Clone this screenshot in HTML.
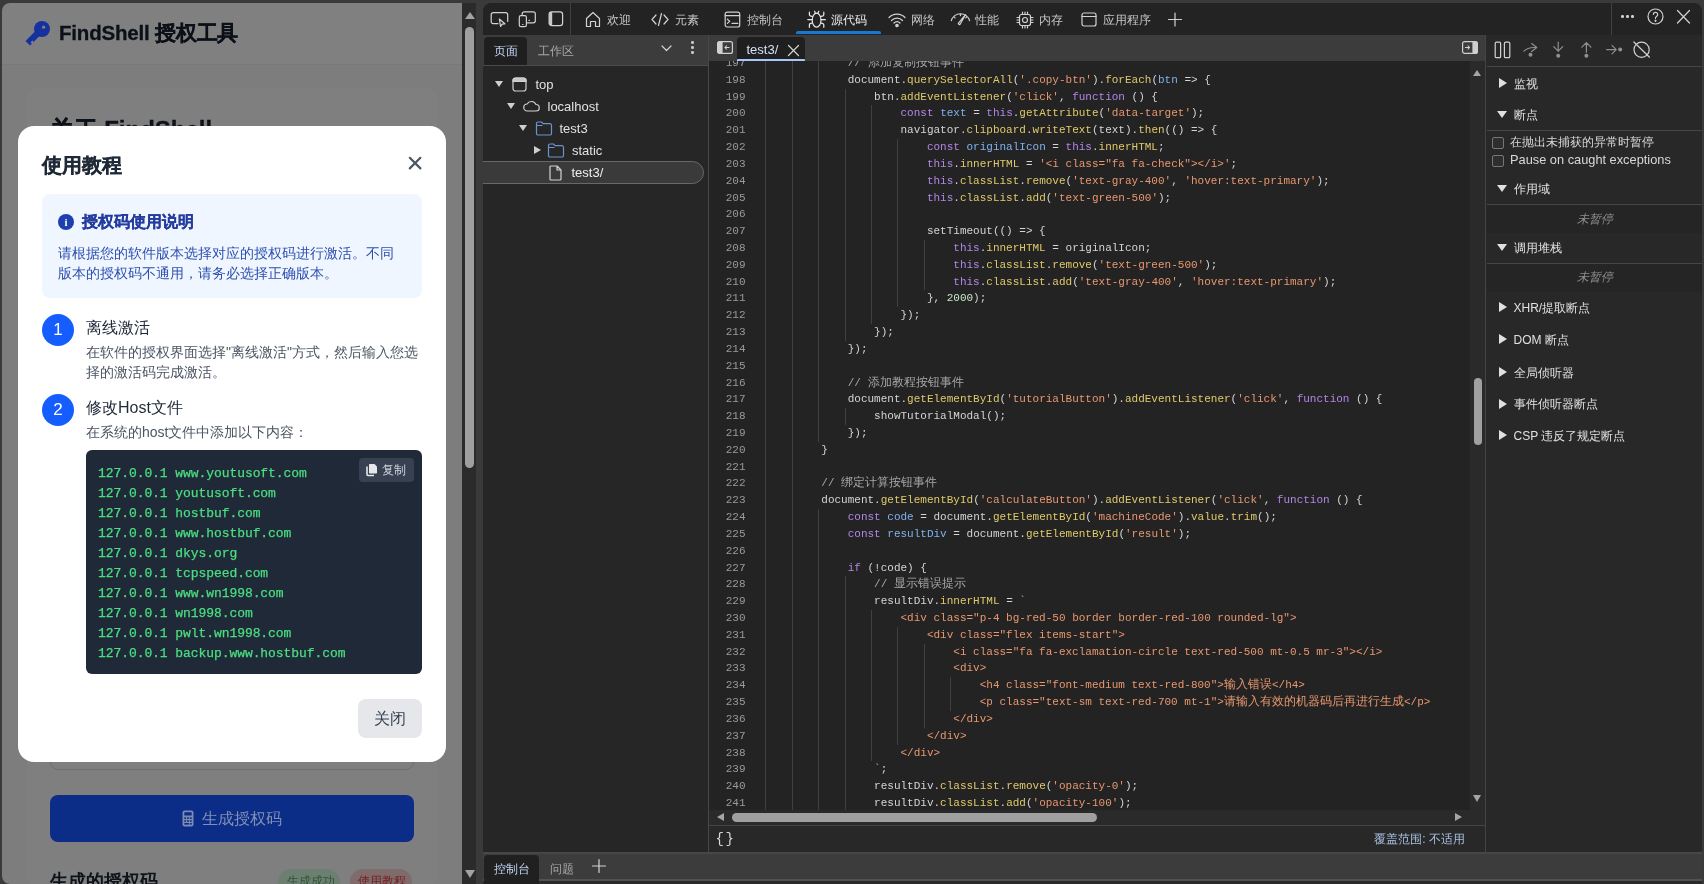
<!DOCTYPE html><html><head><meta charset="utf-8"><style>
*{box-sizing:border-box;margin:0;padding:0}
html,body{width:1704px;height:884px;overflow:hidden;background:#3a3a3a}
body{position:relative;font-family:"Liberation Sans",sans-serif}
.a{position:absolute}
.ic{position:absolute;overflow:visible}
#page{position:absolute;left:0;top:0;width:1704px;height:884px;clip-path:inset(3px 1242px 0 2px round 8px 0 0 8px);background:#7d7d7d}
#dt{position:absolute;left:0;top:0;width:1704px;height:884px;clip-path:inset(3px 2px 0 483px round 8px 8px 0 0);background:#282828}
.tb{position:absolute;font-size:12px;color:#c6c6c6;line-height:14px;white-space:nowrap}
.lno{position:absolute;left:709px;width:36.5px;text-align:right;height:16.82px;line-height:16.82px;font-family:"Liberation Mono",monospace;font-size:11px;color:#9a9a9a}
.ln{position:absolute;height:16.82px;line-height:16.82px;font-family:"Liberation Mono",monospace;font-size:11px;color:#d4d4d4;white-space:pre}
.ln .cj{font-size:12px}
.gd{position:absolute;width:1px;background:#404040}
.k{color:#b186e6}.s{color:#e8976f}.f{color:#e0c96a}.v{color:#80b2ec}.d{color:#d4d4d4}.c{color:#a6a6a6}.n{color:#c9e8c9}
.sbt{position:absolute;left:1513px;font-size:12px;color:#d8d8d8;line-height:14px;white-space:nowrap}
.tri{position:absolute;width:0;height:0}
.mono{font-family:"Liberation Mono",monospace}
#page,#dt,#code{will-change:transform}
</style></head><body>
<div id="page">
<div class="a" style="left:2px;top:3px;width:460px;height:62px;background:#808080;border-bottom:1.5px solid #787878"></div>
<svg class="ic" style="left:20px;top:14px" width="36" height="36" viewBox="0 0 36 36" ><circle cx="22" cy="15" r="8" fill="#14319f"/><path d="M18.5 18.5L7.8 29.2" stroke="#14319f" stroke-width="6.4" stroke-linecap="butt"/><path d="M10.5 28.4L12.4 26.5 14.3 28.4 12.4 30.3z" fill="#7f7f7f"/><circle cx="23.6" cy="13.2" r="1.6" fill="#808080"/></svg>
<div class="a" style="left:59px;top:20.8px;font-size:20.5px;line-height:24.5px;color:#0c1018;white-space:nowrap;font-weight:bold;letter-spacing:-0.2px;-webkit-text-stroke:0.3px #0c1018">FindShell 授权工具</div>
<div class="a" style="left:26px;top:87px;width:412px;height:800px;background:#7f7f7f;border-radius:12px;box-shadow:0 0 1px rgba(0,0,0,0.08)"></div>
<div class="a" style="left:49.5px;top:115.5px;font-size:24px;line-height:28px;color:#0e121a;white-space:nowrap;font-weight:bold;-webkit-text-stroke:0.3px #0e121a">关于 FindShell</div>
<div class="a" style="left:50px;top:720px;width:364px;height:50px;border:1px solid #6e6e6e;border-radius:8px"></div>
<div class="a" style="left:50px;top:795px;width:364px;height:47px;background:#0b2d88;border-radius:8px"></div>
<svg class="ic" style="left:182px;top:810px" width="12" height="17" viewBox="0 0 12 17" ><rect x="0.5" y="0.5" width="11" height="16" rx="2" fill="#7d8bb2"/><rect x="2.3" y="2.3" width="7.4" height="3.2" rx=".5" fill="#0b2d88"/><g fill="#0b2d88"><rect x="2.3" y="7.3" width="1.8" height="1.6"/><rect x="5.1" y="7.3" width="1.8" height="1.6"/><rect x="7.9" y="7.3" width="1.8" height="1.6"/><rect x="2.3" y="10.2" width="1.8" height="1.6"/><rect x="5.1" y="10.2" width="1.8" height="1.6"/><rect x="7.9" y="10.2" width="1.8" height="1.6"/><rect x="2.3" y="13" width="4.6" height="1.6"/><rect x="7.9" y="13" width="1.8" height="1.6"/></g></svg>
<div class="a" style="left:202px;top:809.0px;font-size:16px;line-height:20px;color:#8290b5;white-space:nowrap;">生成授权码</div>
<div class="a" style="left:50px;top:870.0px;font-size:18px;line-height:22px;color:#0e121a;white-space:nowrap;font-weight:bold">生成的授权码</div>
<div class="a" style="left:278px;top:869px;width:62px;height:26px;background:#6d7f70;border-radius:13px"></div>
<div class="a" style="left:287px;top:873.0px;font-size:12px;line-height:16px;color:#2d5638;white-space:nowrap;">生成成功</div>
<div class="a" style="left:350px;top:869px;width:62px;height:26px;background:#7f6b6b;border-radius:13px"></div>
<div class="a" style="left:358px;top:873.0px;font-size:12px;line-height:16px;color:#742020;white-space:nowrap;">使用教程</div>
<div class="a" style="left:18px;top:126px;width:428px;height:636px;background:#fff;border-radius:16px"></div>
<div class="a" style="left:42px;top:153.0px;font-size:20px;line-height:24px;color:#1f2937;white-space:nowrap;font-weight:bold;-webkit-text-stroke:0.3px #1f2937">使用教程</div>
<svg class="ic" style="left:407.5px;top:155.5px" width="14" height="14" viewBox="0 0 14 14" ><path d="M1.8 1.8l10.6 10.6M12.4 1.8L1.8 12.4" stroke="#4b5563" stroke-width="2.2" stroke-linecap="round"/></svg>
<div class="a" style="left:42px;top:194px;width:380px;height:104px;background:#eff6ff;border-radius:8px"></div>
<div class="a" style="left:58px;top:214px;width:16px;height:16px;border-radius:50%;background:#1e40af"></div>
<div class="a" style="left:58px;top:214px;width:16px;height:16px;text-align:center;font:bold 11px/16px 'Liberation Serif',serif;color:#fff">i</div>
<div class="a" style="left:82px;top:212.3px;font-size:16px;line-height:20px;color:#243c9e;white-space:nowrap;font-weight:bold;-webkit-text-stroke:0.25px #243c9e">授权码使用说明</div>
<div class="a" style="left:58px;top:243.5px;font-size:14px;line-height:18px;color:#2d4fae;white-space:nowrap;">请根据您的软件版本选择对应的授权码进行激活。不同</div>
<div class="a" style="left:58px;top:263.5px;font-size:14px;line-height:18px;color:#2d4fae;white-space:nowrap;">版本的授权码不通用，请务必选择正确版本。</div>
<div class="a" style="left:42px;top:314px;width:32px;height:32px;border-radius:50%;background:#165dff;color:#fff;text-align:center;font-size:17px;line-height:32px">1</div>
<div class="a" style="left:86px;top:317.7px;font-size:16px;line-height:20px;color:#1f2937;white-space:nowrap;">离线激活</div>
<div class="a" style="left:86px;top:343.0px;font-size:14px;line-height:18px;color:#4b5563;white-space:nowrap;">在软件的授权界面选择"离线激活"方式，然后输入您选</div>
<div class="a" style="left:86px;top:363.0px;font-size:14px;line-height:18px;color:#4b5563;white-space:nowrap;">择的激活码完成激活。</div>
<div class="a" style="left:42px;top:394px;width:32px;height:32px;border-radius:50%;background:#165dff;color:#fff;text-align:center;font-size:17px;line-height:32px">2</div>
<div class="a" style="left:86px;top:397.7px;font-size:16px;line-height:20px;color:#1f2937;white-space:nowrap;">修改Host文件</div>
<div class="a" style="left:86px;top:423.0px;font-size:14px;line-height:18px;color:#4b5563;white-space:nowrap;">在系统的host文件中添加以下内容：</div>
<div class="a" style="left:86px;top:450px;width:336px;height:224px;background:#1f2937;border-radius:6px"></div>
<div class="a" style="left:98px;top:464.5px;font-size:13px;line-height:17px;color:#4ade80;white-space:nowrap;font-family:'Liberation Mono',monospace;letter-spacing:-0.07px;-webkit-text-stroke:0.25px #4ade80">127.0.0.1 www.youtusoft.com</div>
<div class="a" style="left:98px;top:484.5px;font-size:13px;line-height:17px;color:#4ade80;white-space:nowrap;font-family:'Liberation Mono',monospace;letter-spacing:-0.07px;-webkit-text-stroke:0.25px #4ade80">127.0.0.1 youtusoft.com</div>
<div class="a" style="left:98px;top:504.5px;font-size:13px;line-height:17px;color:#4ade80;white-space:nowrap;font-family:'Liberation Mono',monospace;letter-spacing:-0.07px;-webkit-text-stroke:0.25px #4ade80">127.0.0.1 hostbuf.com</div>
<div class="a" style="left:98px;top:524.5px;font-size:13px;line-height:17px;color:#4ade80;white-space:nowrap;font-family:'Liberation Mono',monospace;letter-spacing:-0.07px;-webkit-text-stroke:0.25px #4ade80">127.0.0.1 www.hostbuf.com</div>
<div class="a" style="left:98px;top:544.5px;font-size:13px;line-height:17px;color:#4ade80;white-space:nowrap;font-family:'Liberation Mono',monospace;letter-spacing:-0.07px;-webkit-text-stroke:0.25px #4ade80">127.0.0.1 dkys.org</div>
<div class="a" style="left:98px;top:564.5px;font-size:13px;line-height:17px;color:#4ade80;white-space:nowrap;font-family:'Liberation Mono',monospace;letter-spacing:-0.07px;-webkit-text-stroke:0.25px #4ade80">127.0.0.1 tcpspeed.com</div>
<div class="a" style="left:98px;top:584.5px;font-size:13px;line-height:17px;color:#4ade80;white-space:nowrap;font-family:'Liberation Mono',monospace;letter-spacing:-0.07px;-webkit-text-stroke:0.25px #4ade80">127.0.0.1 www.wn1998.com</div>
<div class="a" style="left:98px;top:604.5px;font-size:13px;line-height:17px;color:#4ade80;white-space:nowrap;font-family:'Liberation Mono',monospace;letter-spacing:-0.07px;-webkit-text-stroke:0.25px #4ade80">127.0.0.1 wn1998.com</div>
<div class="a" style="left:98px;top:624.5px;font-size:13px;line-height:17px;color:#4ade80;white-space:nowrap;font-family:'Liberation Mono',monospace;letter-spacing:-0.07px;-webkit-text-stroke:0.25px #4ade80">127.0.0.1 pwlt.wn1998.com</div>
<div class="a" style="left:98px;top:644.5px;font-size:13px;line-height:17px;color:#4ade80;white-space:nowrap;font-family:'Liberation Mono',monospace;letter-spacing:-0.07px;-webkit-text-stroke:0.25px #4ade80">127.0.0.1 backup.www.hostbuf.com</div>
<div class="a" style="left:359px;top:458px;width:55px;height:24px;background:#374151;border-radius:4px"></div>
<svg class="ic" style="left:366px;top:463px" width="12" height="13" viewBox="0 0 12 13" ><path d="M4 1h4.5L11 3.5V9.5c0 .6-.4 1-1 1H4c-.6 0-1-.4-1-1V2c0-.6.4-1 1-1z" fill="#e5e7eb"/><path d="M1 3.5v8c0 .6.4 1 1 1h6" stroke="#e5e7eb" stroke-width="1.6" fill="none"/></svg>
<div class="a" style="left:382px;top:462.0px;font-size:12px;line-height:16px;color:#d1d5db;white-space:nowrap;">复制</div>
<div class="a" style="left:358px;top:699px;width:64px;height:39px;background:#e5e7eb;border-radius:8px"></div>
<div class="a" style="left:374px;top:708.5px;font-size:16px;line-height:20px;color:#374151;white-space:nowrap;">关闭</div>
</div>
<div class="a" style="left:462px;top:3px;width:14px;height:881px;background:#2b2b2b"></div>
<div class="tri" style="left:465px;top:11.5px;border-bottom:7.5px solid #a3a3a3;border-left:5.0px solid transparent;border-right:5.0px solid transparent"></div>
<div class="a" style="left:465px;top:27px;width:9px;height:441px;background:#9f9f9f;border-radius:4.5px"></div>
<div class="tri" style="left:465px;top:870px;border-top:8px solid #a3a3a3;border-left:5.0px solid transparent;border-right:5.0px solid transparent"></div>
<div id="dt">
<div class="a" style="left:483px;top:3px;width:1219px;height:32px;background:#232323"></div>
<svg class="ic" style="left:490px;top:11px" width="19" height="17" viewBox="0 0 19 17" fill="none" stroke="#d2d2d2" stroke-width="1.2" stroke-linecap="round" stroke-linejoin="round"><path d="M8 12.7H3.2a2 2 0 0 1-2-2V3.7a2 2 0 0 1 2-2h12.5a2 2 0 0 1 2 2v6.8"/><path d="M9.3 8l5.6 4.8-2.7.4-1.6 2.2z"/></svg>
<svg class="ic" style="left:518px;top:11px" width="19" height="17" viewBox="0 0 19 17" fill="none" stroke="#d2d2d2" stroke-width="1.2" stroke-linecap="round" stroke-linejoin="round"><path d="M4.2 3.6V2.9a2 2 0 0 1 2-2h9.1a2 2 0 0 1 2 2v6.9a2 2 0 0 1-2 2H9.4"/><rect x="1.3" y="4.6" width="7.1" height="11.1" rx="1.6"/><path d="M10.9 9.3h.6M4.6 13.5h.4"/></svg>
<svg class="ic" style="left:548px;top:11px" width="16" height="16" viewBox="0 0 16 16" fill="none" stroke="#d2d2d2" stroke-width="1.2" stroke-linecap="round" stroke-linejoin="round"><rect x="1.1" y="0.9" width="13.5" height="13.8" rx="2.6"/><path d="M1.1 3.5a2.6 2.6 0 0 1 2.6-2.6H4.2V14.7H3.7a2.6 2.6 0 0 1-2.6-2.6z" fill="#c8c8c8" stroke="none"/></svg>
<div class="a" style="left:569.5px;top:3px;width:1px;height:32px;background:#404040"></div>
<svg class="ic" style="left:585px;top:11px" width="16" height="17" viewBox="0 0 16 17" fill="none" stroke="#d2d2d2" stroke-width="1.2" stroke-linecap="round" stroke-linejoin="round"><path d="M1.5 7.5L8 1.5l6.5 6v8H10.5v-5h-5v5H1.5z"/></svg>
<div class="a" style="left:607px;top:11.5px;font-size:12px;line-height:16px;color:#c6c6c6;white-space:nowrap;">欢迎</div>
<svg class="ic" style="left:651px;top:12px" width="18" height="15" viewBox="0 0 18 15" fill="none" stroke="#d2d2d2" stroke-width="1.2" stroke-linecap="round" stroke-linejoin="round"><path d="M5 3L1 7.5 5 12M13 3l4 4.5L13 12M10.5 1.5L7.5 13.5"/></svg>
<div class="a" style="left:674.5px;top:11.5px;font-size:12px;line-height:16px;color:#c6c6c6;white-space:nowrap;">元素</div>
<svg class="ic" style="left:724px;top:11px" width="17" height="17" viewBox="0 0 17 17" fill="none" stroke="#d2d2d2" stroke-width="1.2" stroke-linecap="round" stroke-linejoin="round"><rect x="1.2" y="1.1" width="14.5" height="14.9" rx="2"/><path d="M1.2 4.7h14.5M3.4 8.2l2.3 2.2-2.3 2M8 12.4h5.8"/></svg>
<div class="a" style="left:746.5px;top:11.5px;font-size:12px;line-height:16px;color:#c6c6c6;white-space:nowrap;">控制台</div>
<svg class="ic" style="left:806px;top:9px" width="22" height="20" viewBox="0 0 22 20" fill="none" stroke="#e8e8e8" stroke-width="1.2" stroke-linecap="round" stroke-linejoin="round"><ellipse cx="10.6" cy="11.2" rx="4.4" ry="7"/><path d="M3.4 3.1V5.5Q3.4 7.3 6.3 7.3M1.8 10.6H6.3M6.3 14.1Q3.4 14.1 3.4 16V18.3M17.8 3.1V5.5Q17.8 7.3 14.9 7.3M19.4 10.6H14.9M14.9 14.1Q17.8 14.1 17.8 16V18.3M8.6 2.2L9.5 4.4M12.8 2.2L11.8 4.4"/></svg>
<div class="a" style="left:830.5px;top:11.5px;font-size:12px;line-height:16px;color:#ececec;white-space:nowrap;">源代码</div>
<div class="a" style="left:795.5px;top:31px;width:85px;height:3px;background:#1b78d0;border-radius:2px 2px 0 0"></div>
<svg class="ic" style="left:888px;top:12px" width="18" height="15" viewBox="0 0 18 15" fill="none" stroke="#d2d2d2" stroke-width="1.2" stroke-linecap="round" stroke-linejoin="round"><path d="M1 5.5a11 11 0 0 1 16 0M3.5 8.5a7.5 7.5 0 0 1 11 0M6 11a4 4 0 0 1 6 0"/><circle cx="9" cy="13.5" r="1.2" fill="#c8c8c8"/></svg>
<div class="a" style="left:910.5px;top:11.5px;font-size:12px;line-height:16px;color:#c6c6c6;white-space:nowrap;">网络</div>
<svg class="ic" style="left:950px;top:11px" width="21" height="16" viewBox="0 0 21 16" fill="none" stroke="#d2d2d2" stroke-width="1.2" stroke-linecap="round" stroke-linejoin="round"><path d="M1.3 9.7A9.5 9.5 0 0 1 19.6 9.7M10.45 2.8v1.8M3.8 5.6l1.3 1.3M17.1 5.6l-1.3 1.3M8.3 12.3L15.5 3.7 10.1 13.3Q9 14.3 8.3 12.3z"/></svg>
<div class="a" style="left:975px;top:11.5px;font-size:12px;line-height:16px;color:#c6c6c6;white-space:nowrap;">性能</div>
<svg class="ic" style="left:1016px;top:11px" width="18" height="18" viewBox="0 0 18 18" fill="none" stroke="#d2d2d2" stroke-width="1.2" stroke-linecap="round" stroke-linejoin="round"><rect x="3.5" y="3.5" width="11" height="11" rx="2"/><circle cx="9" cy="9" r="2.5"/><path d="M6.5 1v2.5M9 1v2.5M11.5 1v2.5M6.5 14.5V17M9 14.5V17M11.5 14.5V17M1 6.5h2.5M1 9h2.5M1 11.5h2.5M14.5 6.5H17M14.5 9H17M14.5 11.5H17"/></svg>
<div class="a" style="left:1039px;top:11.5px;font-size:12px;line-height:16px;color:#c6c6c6;white-space:nowrap;">内存</div>
<svg class="ic" style="left:1081px;top:12px" width="16" height="15" viewBox="0 0 16 15" fill="none" stroke="#d2d2d2" stroke-width="1.2" stroke-linecap="round" stroke-linejoin="round"><rect x="1" y="1" width="14" height="13" rx="2"/><path d="M1 4.5h14"/></svg>
<div class="a" style="left:1102.5px;top:11.5px;font-size:12px;line-height:16px;color:#c6c6c6;white-space:nowrap;">应用程序</div>
<svg class="ic" style="left:1168px;top:12px" width="14" height="15" viewBox="0 0 14 15" fill="none" stroke="#d2d2d2" stroke-width="1.2" stroke-linecap="round" stroke-linejoin="round"><path d="M7 1v13M0.5 7.5h13"/></svg>
<div class="a" style="left:1611px;top:3px;width:1px;height:32px;background:#404040"></div>
<div class="a" style="left:1621.0px;top:15.3px;width:2.6px;height:2.6px;border-radius:50%;background:#d0d0d0"></div>
<div class="a" style="left:1626.1px;top:15.3px;width:2.6px;height:2.6px;border-radius:50%;background:#d0d0d0"></div>
<div class="a" style="left:1631.2px;top:15.3px;width:2.6px;height:2.6px;border-radius:50%;background:#d0d0d0"></div>
<svg class="ic" style="left:1647px;top:8px" width="17" height="17" viewBox="0 0 17 17" fill="none" stroke="#d2d2d2" stroke-width="1.2" stroke-linecap="round" stroke-linejoin="round"><circle cx="8.5" cy="8.5" r="7.5"/><path d="M6.3 6.5a2.2 2.2 0 1 1 3.2 2c-.7.4-1 .8-1 1.5v.6"/><circle cx="8.5" cy="12.8" r=".5" fill="#c8c8c8"/></svg>
<svg class="ic" style="left:1677px;top:10px" width="13" height="14" viewBox="0 0 13 14" fill="none" stroke="#d2d2d2" stroke-width="1.2" stroke-linecap="round" stroke-linejoin="round"><path d="M0.5 0.5l12 12.5M12.5 0.5l-12 12.5"/></svg>
<div class="a" style="left:483px;top:35px;width:226px;height:30px;background:#3c3c3c"></div>
<div class="a" style="left:483px;top:64.5px;width:226px;height:2px;background:#4a4a4a"></div>
<div class="a" style="left:484px;top:37px;width:43px;height:28px;background:#1f1f1f;border-radius:4px 4px 0 0"></div>
<div class="a" style="left:493.5px;top:42.5px;font-size:12px;line-height:16px;color:#c3d5f5;white-space:nowrap;">页面</div>
<div class="a" style="left:538px;top:42.5px;font-size:12px;line-height:16px;color:#a8a8a8;white-space:nowrap;">工作区</div>
<svg class="ic" style="left:661px;top:45px" width="11" height="7" viewBox="0 0 11 7" fill="none" stroke="#d2d2d2" stroke-width="1.2" stroke-linecap="round" stroke-linejoin="round"><path d="M1 1l4.5 4.5L10 1"/></svg>
<div class="a" style="left:691.3px;top:41.3px;width:2.6px;height:2.6px;border-radius:50%;background:#c8c8c8"></div>
<div class="a" style="left:691.3px;top:46.3px;width:2.6px;height:2.6px;border-radius:50%;background:#c8c8c8"></div>
<div class="a" style="left:691.3px;top:51.3px;width:2.6px;height:2.6px;border-radius:50%;background:#c8c8c8"></div>
<div class="a" style="left:483px;top:66px;width:225px;height:786px;background:#262626"></div>
<div class="a" style="left:470px;top:161px;width:234px;height:23px;background:#3a3a3a;border:1px solid #686868;border-radius:12px"></div>
<div class="tri" style="left:495px;top:80.5px;border-top:6px solid #cfcfcf;border-left:4.5px solid transparent;border-right:4.5px solid transparent"></div>
<svg class="ic" style="left:512px;top:77px" width="15" height="15" viewBox="0 0 15 15" fill="none" stroke="#d0d0d0" stroke-width="1.2" stroke-linecap="round" stroke-linejoin="round"><rect x="1" y="1" width="13" height="13" rx="2.5"/><path d="M1 3.5a2.5 2.5 0 0 1 2.5-2.5h8a2.5 2.5 0 0 1 2.5 2.5V4.5H1z" fill="#c8c8c8"/></svg>
<div class="a" style="left:535.5px;top:76.0px;font-size:13px;line-height:17px;color:#e2e2e2;white-space:nowrap;">top</div>
<div class="tri" style="left:507px;top:102.5px;border-top:6px solid #cfcfcf;border-left:4.5px solid transparent;border-right:4.5px solid transparent"></div>
<svg class="ic" style="left:523px;top:100px" width="17" height="12" viewBox="0 0 17 12" fill="none" stroke="#d2d2d2" stroke-width="1.2" stroke-linecap="round" stroke-linejoin="round"><path d="M4.5 11a3.5 3.5 0 0 1-.4-7A5 5 0 0 1 13 4.5a3.2 3.2 0 0 1 0 6.5z"/></svg>
<div class="a" style="left:547.5px;top:98.0px;font-size:13px;line-height:17px;color:#e2e2e2;white-space:nowrap;">localhost</div>
<div class="tri" style="left:519px;top:124.5px;border-top:6px solid #cfcfcf;border-left:4.5px solid transparent;border-right:4.5px solid transparent"></div>
<svg class="ic" style="left:534.5px;top:121px" width="18" height="15" viewBox="0 0 18 15" fill="none" stroke="#6b93cf" stroke-width="1.2" stroke-linecap="round" stroke-linejoin="round"><path d="M1.5 2.5a1.5 1.5 0 0 1 1.5-1.5h3.5l1.5 1.7h7A1.5 1.5 0 0 1 16.5 4.2V12.5A1.5 1.5 0 0 1 15 14H3a1.5 1.5 0 0 1-1.5-1.5z M1.5 4.5H7"/></svg>
<div class="a" style="left:559.5px;top:120.0px;font-size:13px;line-height:17px;color:#e2e2e2;white-space:nowrap;">test3</div>
<div class="tri" style="left:533.5px;top:146px;border-left:7px solid #cfcfcf;border-top:4.5px solid transparent;border-bottom:4.5px solid transparent"></div>
<svg class="ic" style="left:547px;top:143px" width="18" height="15" viewBox="0 0 18 15" fill="none" stroke="#6b93cf" stroke-width="1.2" stroke-linecap="round" stroke-linejoin="round"><path d="M1.5 2.5a1.5 1.5 0 0 1 1.5-1.5h3.5l1.5 1.7h7A1.5 1.5 0 0 1 16.5 4.2V12.5A1.5 1.5 0 0 1 15 14H3a1.5 1.5 0 0 1-1.5-1.5z M1.5 4.5H7"/></svg>
<div class="a" style="left:572px;top:142.0px;font-size:13px;line-height:17px;color:#e2e2e2;white-space:nowrap;">static</div>
<svg class="ic" style="left:549px;top:165px" width="13" height="16" viewBox="0 0 13 16" fill="none" stroke="#d2d2d2" stroke-width="1.2" stroke-linecap="round" stroke-linejoin="round"><path d="M1 2a1 1 0 0 1 1-1h6l4 4v9a1 1 0 0 1-1 1H2a1 1 0 0 1-1-1z M8 1v4h4"/></svg>
<div class="a" style="left:571.5px;top:164.0px;font-size:13px;line-height:17px;color:#ececec;white-space:nowrap;">test3/</div>
<div class="a" style="left:708px;top:35px;width:1.5px;height:817px;background:#484848"></div>
<div class="a" style="left:709px;top:35px;width:777px;height:26px;background:#3c3c3c"></div>
<svg class="ic" style="left:717px;top:41px" width="16" height="13" viewBox="0 0 16 13" ><rect x="0.6" y="0.6" width="14.8" height="11.8" rx="2" fill="none" stroke="#d0d0d0" stroke-width="1.2"/><rect x="0.6" y="0.6" width="5" height="11.8" rx="1" fill="#d0d0d0"/><path d="M12.5 6.5H8M9.8 4.5L8 6.5l1.8 2" stroke="#d0d0d0" stroke-width="1.1" fill="none"/></svg>
<div class="a" style="left:737px;top:37px;width:68px;height:24px;background:#1f1f1f;border-radius:4px 4px 0 0"></div>
<div class="a" style="left:737px;top:59px;width:68px;height:2.5px;background:#a8c7fa;border-radius:1px"></div>
<div class="a" style="left:746.5px;top:41.0px;font-size:13px;line-height:17px;color:#d2e1f7;white-space:nowrap;">test3/</div>
<svg class="ic" style="left:788px;top:45px" width="11" height="11" viewBox="0 0 11 11" fill="none" stroke="#d2d2d2" stroke-width="1.2" stroke-linecap="round" stroke-linejoin="round"><path d="M0.5 0.5l10 10M10.5 0.5l-10 10"/></svg>
<svg class="ic" style="left:1462px;top:41px" width="16" height="13" viewBox="0 0 16 13" ><rect x="0.6" y="0.6" width="14.8" height="11.8" rx="2" fill="none" stroke="#d0d0d0" stroke-width="1.2"/><rect x="10.4" y="0.6" width="5" height="11.8" rx="1" fill="#d0d0d0"/><path d="M3 6.5h4.5M5.7 4.5L7.5 6.5 5.7 8.5" stroke="#d0d0d0" stroke-width="1.1" fill="none"/></svg>
<div class="a" style="left:709px;top:61px;width:761px;height:749px;background:#232323;overflow:hidden" id="code">
<div class="a" style="left:-709px;top:-61px;width:1704px;height:884px">
<div class="gd" style="left:765.30px;top:54.97px;height:164869.64px"></div>
<div class="gd" style="left:791.70px;top:54.97px;height:164869.64px"></div>
<div class="gd" style="left:818.10px;top:54.97px;height:386.86px"></div>
<div class="gd" style="left:818.10px;top:509.11px;height:164415.50px"></div>
<div class="gd" style="left:844.50px;top:88.61px;height:252.30px"></div>
<div class="gd" style="left:844.50px;top:408.19px;height:16.82px"></div>
<div class="gd" style="left:844.50px;top:576.39px;height:164348.22px"></div>
<div class="gd" style="left:870.90px;top:105.43px;height:218.66px"></div>
<div class="gd" style="left:870.90px;top:610.03px;height:151.38px"></div>
<div class="gd" style="left:897.30px;top:139.07px;height:168.20px"></div>
<div class="gd" style="left:897.30px;top:626.85px;height:117.74px"></div>
<div class="gd" style="left:923.70px;top:239.99px;height:50.46px"></div>
<div class="gd" style="left:923.70px;top:643.67px;height:84.10px"></div>
<div class="gd" style="left:950.10px;top:677.31px;height:33.64px"></div>
<div class="lno" style="top:54.97px">197</div>
<div class="ln" style="left:847.70px;top:54.97px"><span class="c">// <span class="cj">添加复制按钮事件</span></span></div>
<div class="lno" style="top:71.79px">198</div>
<div class="ln" style="left:847.70px;top:71.79px"><span class="d">document.</span><span class="f">querySelectorAll</span><span class="d">(</span><span class="s">'.copy-btn'</span><span class="d">).</span><span class="f">forEach</span><span class="d">(</span><span class="v">btn</span><span class="d"> =&gt; {</span></div>
<div class="lno" style="top:88.61px">199</div>
<div class="ln" style="left:874.10px;top:88.61px"><span class="d">btn.</span><span class="f">addEventListener</span><span class="d">(</span><span class="s">'click'</span><span class="d">, </span><span class="k">function</span><span class="d"> () {</span></div>
<div class="lno" style="top:105.43px">200</div>
<div class="ln" style="left:900.50px;top:105.43px"><span class="k">const</span><span class="d"> </span><span class="v">text</span><span class="d"> = </span><span class="k">this</span><span class="d">.</span><span class="f">getAttribute</span><span class="d">(</span><span class="s">'data-target'</span><span class="d">);</span></div>
<div class="lno" style="top:122.25px">201</div>
<div class="ln" style="left:900.50px;top:122.25px"><span class="d">navigator.</span><span class="f">clipboard</span><span class="d">.</span><span class="f">writeText</span><span class="d">(text).</span><span class="f">then</span><span class="d">(() =&gt; {</span></div>
<div class="lno" style="top:139.07px">202</div>
<div class="ln" style="left:926.90px;top:139.07px"><span class="k">const</span><span class="d"> </span><span class="v">originalIcon</span><span class="d"> = </span><span class="k">this</span><span class="d">.</span><span class="f">innerHTML</span><span class="d">;</span></div>
<div class="lno" style="top:155.89px">203</div>
<div class="ln" style="left:926.90px;top:155.89px"><span class="k">this</span><span class="d">.</span><span class="f">innerHTML</span><span class="d"> = </span><span class="s">'&lt;i class="fa fa-check"&gt;&lt;/i&gt;'</span><span class="d">;</span></div>
<div class="lno" style="top:172.71px">204</div>
<div class="ln" style="left:926.90px;top:172.71px"><span class="k">this</span><span class="d">.</span><span class="f">classList</span><span class="d">.</span><span class="f">remove</span><span class="d">(</span><span class="s">'text-gray-400'</span><span class="d">, </span><span class="s">'hover:text-primary'</span><span class="d">);</span></div>
<div class="lno" style="top:189.53px">205</div>
<div class="ln" style="left:926.90px;top:189.53px"><span class="k">this</span><span class="d">.</span><span class="f">classList</span><span class="d">.</span><span class="f">add</span><span class="d">(</span><span class="s">'text-green-500'</span><span class="d">);</span></div>
<div class="lno" style="top:206.35px">206</div>
<div class="lno" style="top:223.17px">207</div>
<div class="ln" style="left:926.90px;top:223.17px"><span class="d">setTimeout(() =&gt; {</span></div>
<div class="lno" style="top:239.99px">208</div>
<div class="ln" style="left:953.30px;top:239.99px"><span class="k">this</span><span class="d">.</span><span class="f">innerHTML</span><span class="d"> = originalIcon;</span></div>
<div class="lno" style="top:256.81px">209</div>
<div class="ln" style="left:953.30px;top:256.81px"><span class="k">this</span><span class="d">.</span><span class="f">classList</span><span class="d">.</span><span class="f">remove</span><span class="d">(</span><span class="s">'text-green-500'</span><span class="d">);</span></div>
<div class="lno" style="top:273.63px">210</div>
<div class="ln" style="left:953.30px;top:273.63px"><span class="k">this</span><span class="d">.</span><span class="f">classList</span><span class="d">.</span><span class="f">add</span><span class="d">(</span><span class="s">'text-gray-400'</span><span class="d">, </span><span class="s">'hover:text-primary'</span><span class="d">);</span></div>
<div class="lno" style="top:290.45px">211</div>
<div class="ln" style="left:926.90px;top:290.45px"><span class="d">}, </span><span class="n">2000</span><span class="d">);</span></div>
<div class="lno" style="top:307.27px">212</div>
<div class="ln" style="left:900.50px;top:307.27px"><span class="d">});</span></div>
<div class="lno" style="top:324.09px">213</div>
<div class="ln" style="left:874.10px;top:324.09px"><span class="d">});</span></div>
<div class="lno" style="top:340.91px">214</div>
<div class="ln" style="left:847.70px;top:340.91px"><span class="d">});</span></div>
<div class="lno" style="top:357.73px">215</div>
<div class="lno" style="top:374.55px">216</div>
<div class="ln" style="left:847.70px;top:374.55px"><span class="c">// <span class="cj">添加教程按钮事件</span></span></div>
<div class="lno" style="top:391.37px">217</div>
<div class="ln" style="left:847.70px;top:391.37px"><span class="d">document.</span><span class="f">getElementById</span><span class="d">(</span><span class="s">'tutorialButton'</span><span class="d">).</span><span class="f">addEventListener</span><span class="d">(</span><span class="s">'click'</span><span class="d">, </span><span class="k">function</span><span class="d"> () {</span></div>
<div class="lno" style="top:408.19px">218</div>
<div class="ln" style="left:874.10px;top:408.19px"><span class="d">showTutorialModal();</span></div>
<div class="lno" style="top:425.01px">219</div>
<div class="ln" style="left:847.70px;top:425.01px"><span class="d">});</span></div>
<div class="lno" style="top:441.83px">220</div>
<div class="ln" style="left:821.30px;top:441.83px"><span class="d">}</span></div>
<div class="lno" style="top:458.65px">221</div>
<div class="lno" style="top:475.47px">222</div>
<div class="ln" style="left:821.30px;top:475.47px"><span class="c">// <span class="cj">绑定计算按钮事件</span></span></div>
<div class="lno" style="top:492.29px">223</div>
<div class="ln" style="left:821.30px;top:492.29px"><span class="d">document.</span><span class="f">getElementById</span><span class="d">(</span><span class="s">'calculateButton'</span><span class="d">).</span><span class="f">addEventListener</span><span class="d">(</span><span class="s">'click'</span><span class="d">, </span><span class="k">function</span><span class="d"> () {</span></div>
<div class="lno" style="top:509.11px">224</div>
<div class="ln" style="left:847.70px;top:509.11px"><span class="k">const</span><span class="d"> </span><span class="v">code</span><span class="d"> = document.</span><span class="f">getElementById</span><span class="d">(</span><span class="s">'machineCode'</span><span class="d">).</span><span class="f">value</span><span class="d">.</span><span class="f">trim</span><span class="d">();</span></div>
<div class="lno" style="top:525.93px">225</div>
<div class="ln" style="left:847.70px;top:525.93px"><span class="k">const</span><span class="d"> </span><span class="v">resultDiv</span><span class="d"> = document.</span><span class="f">getElementById</span><span class="d">(</span><span class="s">'result'</span><span class="d">);</span></div>
<div class="lno" style="top:542.75px">226</div>
<div class="lno" style="top:559.57px">227</div>
<div class="ln" style="left:847.70px;top:559.57px"><span class="k">if</span><span class="d"> (!code) {</span></div>
<div class="lno" style="top:576.39px">228</div>
<div class="ln" style="left:874.10px;top:576.39px"><span class="c">// <span class="cj">显示错误提示</span></span></div>
<div class="lno" style="top:593.21px">229</div>
<div class="ln" style="left:874.10px;top:593.21px"><span class="d">resultDiv.</span><span class="f">innerHTML</span><span class="d"> = </span><span class="s">`</span></div>
<div class="lno" style="top:610.03px">230</div>
<div class="ln" style="left:900.50px;top:610.03px"><span class="s">&lt;div class="p-4 bg-red-50 border border-red-100 rounded-lg"&gt;</span></div>
<div class="lno" style="top:626.85px">231</div>
<div class="ln" style="left:926.90px;top:626.85px"><span class="s">&lt;div class="flex items-start"&gt;</span></div>
<div class="lno" style="top:643.67px">232</div>
<div class="ln" style="left:953.30px;top:643.67px"><span class="s">&lt;i class="fa fa-exclamation-circle text-red-500 mt-0.5 mr-3"&gt;&lt;/i&gt;</span></div>
<div class="lno" style="top:660.49px">233</div>
<div class="ln" style="left:953.30px;top:660.49px"><span class="s">&lt;div&gt;</span></div>
<div class="lno" style="top:677.31px">234</div>
<div class="ln" style="left:979.70px;top:677.31px"><span class="s">&lt;h4 class="font-medium text-red-800"&gt;<span class="cj">输入错误</span>&lt;/h4&gt;</span></div>
<div class="lno" style="top:694.13px">235</div>
<div class="ln" style="left:979.70px;top:694.13px"><span class="s">&lt;p class="text-sm text-red-700 mt-1"&gt;<span class="cj">请输入有效的机器码后再进行生成</span>&lt;/p&gt;</span></div>
<div class="lno" style="top:710.95px">236</div>
<div class="ln" style="left:953.30px;top:710.95px"><span class="s">&lt;/div&gt;</span></div>
<div class="lno" style="top:727.77px">237</div>
<div class="ln" style="left:926.90px;top:727.77px"><span class="s">&lt;/div&gt;</span></div>
<div class="lno" style="top:744.59px">238</div>
<div class="ln" style="left:900.50px;top:744.59px"><span class="s">&lt;/div&gt;</span></div>
<div class="lno" style="top:761.41px">239</div>
<div class="ln" style="left:874.10px;top:761.41px"><span class="s">`</span><span class="d">;</span></div>
<div class="lno" style="top:778.23px">240</div>
<div class="ln" style="left:874.10px;top:778.23px"><span class="d">resultDiv.</span><span class="f">classList</span><span class="d">.</span><span class="f">remove</span><span class="d">(</span><span class="s">'opacity-0'</span><span class="d">);</span></div>
<div class="lno" style="top:795.05px">241</div>
<div class="ln" style="left:874.10px;top:795.05px"><span class="d">resultDiv.</span><span class="f">classList</span><span class="d">.</span><span class="f">add</span><span class="d">(</span><span class="s">'opacity-100'</span><span class="d">);</span></div>
</div></div>
<div class="a" style="left:1470px;top:61px;width:15px;height:749px;background:#2a2a2a"></div>
<div class="tri" style="left:1473px;top:70px;border-bottom:6.5px solid #a5a5a5;border-left:4.75px solid transparent;border-right:4.75px solid transparent"></div>
<div class="a" style="left:1474px;top:378px;width:8px;height:67px;background:#a0a0a0;border-radius:4px"></div>
<div class="tri" style="left:1473px;top:795px;border-top:7px solid #a5a5a5;border-left:4.75px solid transparent;border-right:4.75px solid transparent"></div>
<div class="a" style="left:709px;top:810px;width:761px;height:15px;background:#2a2a2a"></div>
<div class="tri" style="left:717px;top:813px;border-right:7px solid #a5a5a5;border-top:4.75px solid transparent;border-bottom:4.75px solid transparent"></div>
<div class="a" style="left:732px;top:813px;width:365px;height:9px;background:#a0a0a0;border-radius:4.5px"></div>
<div class="tri" style="left:1455px;top:813px;border-left:7px solid #a5a5a5;border-top:4.75px solid transparent;border-bottom:4.75px solid transparent"></div>
<div class="a" style="left:1470px;top:810px;width:15px;height:15px;background:#2a2a2a"></div>
<div class="a" style="left:709px;top:825px;width:777px;height:1px;background:#454545"></div>
<div class="a" style="left:709px;top:826px;width:777px;height:26px;background:#282828"></div>
<div class="a" style="left:715.5px;top:830.0px;font-size:14px;line-height:18px;color:#d8d8d8;white-space:nowrap;font-family:'Liberation Mono',monospace;letter-spacing:-3.4px">{ }</div>
<div class="a" style="left:1300px;top:831px;width:165px;height:16px;text-align:right;font-size:12px;line-height:16px;color:#a9c0e0;white-space:nowrap">覆盖范围: 不适用</div>
<div class="a" style="left:1485px;top:35px;width:1.3px;height:817px;background:#444"></div>
<div class="a" style="left:1487px;top:66px;width:215px;height:1px;background:#454545"></div>
<svg class="ic" style="left:1494px;top:41px" width="17" height="18" viewBox="0 0 17 18" fill="none" stroke="#d2d2d2" stroke-width="1.2" stroke-linecap="round" stroke-linejoin="round"><rect x="1.2" y="1.2" width="5.4" height="15.5" rx="1.3"/><rect x="10.4" y="1.2" width="5.4" height="15.5" rx="1.3"/></svg>
<svg class="ic" style="left:1523px;top:42px" width="16" height="16" viewBox="0 0 16 16" fill="none" stroke="#8f8f8f" stroke-width="1.2" stroke-linecap="round" stroke-linejoin="round"><path d="M1 9.2Q5 4.8 13.5 5.6M8.6 1.6L13.8 5.6 8.6 9.6"/><circle cx="7.5" cy="12.7" r="2" fill="#8f8f8f" stroke="none"/></svg>
<svg class="ic" style="left:1552px;top:41px" width="12" height="17" viewBox="0 0 12 17" fill="none" stroke="#8f8f8f" stroke-width="1.2" stroke-linecap="round" stroke-linejoin="round"><path d="M6.2 1v9.4M1.7 5.6L6.2 10.2 10.7 5.6"/><circle cx="6.2" cy="14.7" r="2" fill="#8f8f8f" stroke="none"/></svg>
<svg class="ic" style="left:1580px;top:41px" width="12" height="17" viewBox="0 0 12 17" fill="none" stroke="#8f8f8f" stroke-width="1.2" stroke-linecap="round" stroke-linejoin="round"><path d="M6.4 11.2V1.6M1.9 6.1L6.4 1.6 10.9 6.1"/><circle cx="6.4" cy="14.7" r="2" fill="#8f8f8f" stroke="none"/></svg>
<svg class="ic" style="left:1605px;top:41px" width="18" height="17" viewBox="0 0 18 17" fill="none" stroke="#8f8f8f" stroke-width="1.2" stroke-linecap="round" stroke-linejoin="round"><path d="M1.6 8.6h9.6M7 4.4l4.2 4.2L7 12.8"/><circle cx="15.2" cy="8.6" r="2" fill="#8f8f8f" stroke="none"/></svg>
<svg class="ic" style="left:1632px;top:41px" width="19" height="18" viewBox="0 0 19 18" fill="none" stroke="#d2d2d2" stroke-width="1.2" stroke-linecap="round" stroke-linejoin="round"><circle cx="9.6" cy="8.8" r="7.6"/><path d="M1.9 1L17.5 16.2"/></svg>
<div class="tri" style="left:1499px;top:78.0px;border-left:8px solid #e0e0e0;border-top:5px solid transparent;border-bottom:5px solid transparent"></div><div class="a" style="left:1513.5px;top:75.8px;font-size:12px;line-height:16px;color:#e0e0e0;white-space:nowrap;">监视</div>
<div class="tri" style="left:1497px;top:110.8px;border-top:7px solid #e0e0e0;border-left:5px solid transparent;border-right:5px solid transparent"></div><div class="a" style="left:1513.5px;top:107.1px;font-size:12px;line-height:16px;color:#e0e0e0;white-space:nowrap;">断点</div>
<div class="a" style="left:1487px;top:130px;width:215px;height:1px;background:#454545"></div>
<div class="a" style="left:1492px;top:137px;width:12px;height:12px;border:1px solid #767676;border-radius:2px;background:#2e2e2e"></div>
<div class="a" style="left:1510px;top:134.0px;font-size:12px;line-height:16px;color:#d8d8d8;white-space:nowrap;">在抛出未捕获的异常时暂停</div>
<div class="a" style="left:1492px;top:155px;width:12px;height:12px;border:1px solid #767676;border-radius:2px;background:#2e2e2e"></div>
<div class="a" style="left:1510px;top:152.4px;font-size:12.8px;line-height:16.8px;color:#d8d8d8;white-space:nowrap;">Pause on caught exceptions</div>
<div class="tri" style="left:1497px;top:184.9px;border-top:7px solid #e0e0e0;border-left:5px solid transparent;border-right:5px solid transparent"></div><div class="a" style="left:1513.5px;top:181.2px;font-size:12px;line-height:16px;color:#e0e0e0;white-space:nowrap;">作用域</div>
<div class="a" style="left:1487px;top:204px;width:215px;height:1px;background:#454545"></div>
<div class="a" style="left:1487px;top:205px;width:215px;height:28px;background:#252525"></div>
<div class="a" style="left:1487px;top:211px;width:215px;text-align:center;font-size:12px;line-height:16px;color:#8e8e8e;font-style:italic">未暂停</div>
<div class="tri" style="left:1497px;top:243.8px;border-top:7px solid #e0e0e0;border-left:5px solid transparent;border-right:5px solid transparent"></div><div class="a" style="left:1513.5px;top:240.1px;font-size:12px;line-height:16px;color:#e0e0e0;white-space:nowrap;">调用堆栈</div>
<div class="a" style="left:1487px;top:263px;width:215px;height:1px;background:#454545"></div>
<div class="a" style="left:1487px;top:264px;width:215px;height:28px;background:#252525"></div>
<div class="a" style="left:1487px;top:269px;width:215px;text-align:center;font-size:12px;line-height:16px;color:#8e8e8e;font-style:italic">未暂停</div>
<div class="tri" style="left:1499px;top:302.1px;border-left:8px solid #e0e0e0;border-top:5px solid transparent;border-bottom:5px solid transparent"></div><div class="a" style="left:1513.5px;top:299.9px;font-size:12px;line-height:16px;color:#e0e0e0;white-space:nowrap;">XHR/提取断点</div>
<div class="tri" style="left:1499px;top:334.2px;border-left:8px solid #e0e0e0;border-top:5px solid transparent;border-bottom:5px solid transparent"></div><div class="a" style="left:1513.5px;top:332.0px;font-size:12px;line-height:16px;color:#e0e0e0;white-space:nowrap;">DOM 断点</div>
<div class="tri" style="left:1499px;top:366.7px;border-left:8px solid #e0e0e0;border-top:5px solid transparent;border-bottom:5px solid transparent"></div><div class="a" style="left:1513.5px;top:364.5px;font-size:12px;line-height:16px;color:#e0e0e0;white-space:nowrap;">全局侦听器</div>
<div class="tri" style="left:1499px;top:398.5px;border-left:8px solid #e0e0e0;border-top:5px solid transparent;border-bottom:5px solid transparent"></div><div class="a" style="left:1513.5px;top:396.3px;font-size:12px;line-height:16px;color:#e0e0e0;white-space:nowrap;">事件侦听器断点</div>
<div class="tri" style="left:1499px;top:430.3px;border-left:8px solid #e0e0e0;border-top:5px solid transparent;border-bottom:5px solid transparent"></div><div class="a" style="left:1513.5px;top:428.1px;font-size:12px;line-height:16px;color:#e0e0e0;white-space:nowrap;">CSP 违反了规定断点</div>
<div class="a" style="left:483px;top:852px;width:1219px;height:2px;background:#474747"></div>
<div class="a" style="left:483px;top:854px;width:1219px;height:25px;background:#3c3c3c"></div>
<div class="a" style="left:550px;top:860.5px;font-size:12px;line-height:16px;color:#a8a8a8;white-space:nowrap;">问题</div>
<svg class="ic" style="left:592px;top:859px" width="14" height="14" viewBox="0 0 14 14" fill="none" stroke="#d2d2d2" stroke-width="1.2" stroke-linecap="round" stroke-linejoin="round"><path d="M7 0.5v13M0.5 7h13"/></svg>
<div class="a" style="left:483px;top:879px;width:1219px;height:2px;background:#525252"></div>
<div class="a" style="left:483px;top:881px;width:1219px;height:3px;background:#2a2a2a"></div>
<div class="a" style="left:484px;top:855px;width:55px;height:29px;background:#202020;border-radius:4px 4px 0 0"></div>
<div class="a" style="left:493.5px;top:860.5px;font-size:12px;line-height:16px;color:#c3d5f5;white-space:nowrap;">控制台</div>
</div>
</body></html>
